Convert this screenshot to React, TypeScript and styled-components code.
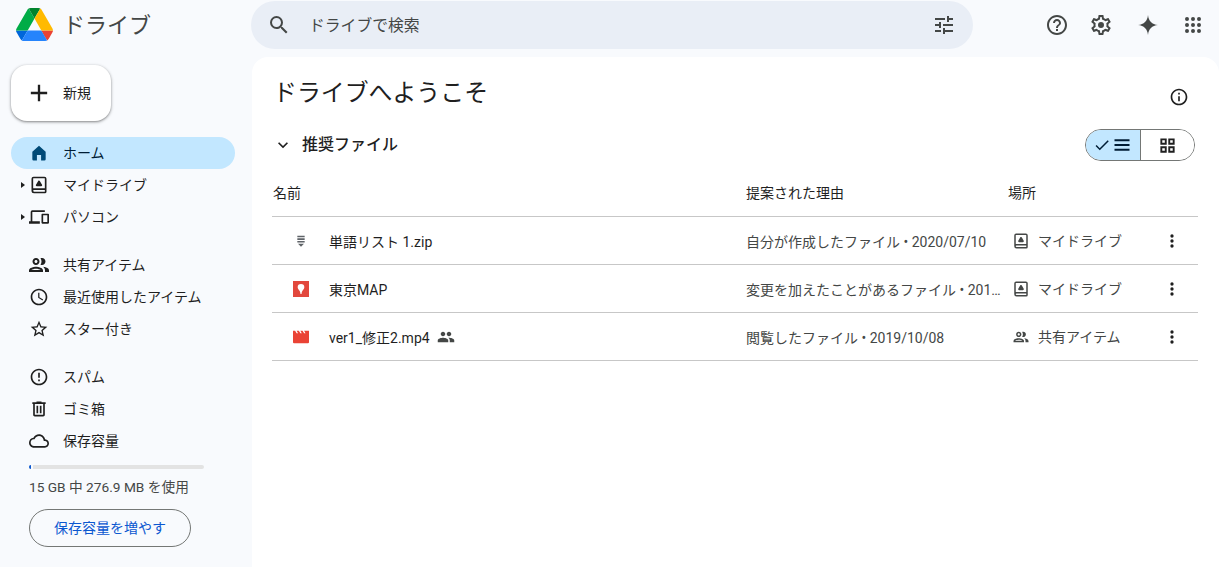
import React from "react";
import styled, { createGlobalStyle } from "styled-components";

const P = {
  search: "M15.5 14h-.79l-.28-.27A6.471 6.471 0 0 0 16 9.5 6.5 6.5 0 1 0 9.5 16c1.61 0 3.09-.59 4.23-1.57l.27.28v.79l5 4.99L20.49 19l-4.99-5zm-6 0C7.01 14 5 11.99 5 9.5S7.01 5 9.5 5 14 7.01 14 9.5 11.99 14 9.5 14z",
  tune: "M3 17v2h6v-2H3zM3 5v2h10V5H3zm10 16v-2h8v-2h-8v-2h-2v6h2zM7 9v2H3v2h4v2h2V9H7zm14 4v-2H11v2h10zm-6-4h2V7h4V5h-4V3h-2v6z",
  help: "M11 18h2v-2h-2v2zm1-16C6.48 2 2 6.48 2 12s4.48 10 10 10 10-4.48 10-10S17.52 2 12 2zm0 18c-4.41 0-8-3.59-8-8s3.59-8 8-8 8 3.59 8 8-3.59 8-8 8zm0-14c-2.21 0-4 1.79-4 4h2c0-1.1.9-2 2-2s2 .9 2 2c0 2-3 1.75-3 5h2c0-2.25 3-2.5 3-5 0-2.21-1.79-4-4-4z",
  gear: "M19.43 12.98c.04-.32.07-.64.07-.98 0-.34-.03-.66-.07-.98l2.11-1.65c.19-.15.24-.42.12-.64l-2-3.46c-.09-.16-.26-.25-.44-.25-.06 0-.12.01-.17.03l-2.49 1c-.52-.4-1.08-.73-1.69-.98l-.38-2.65C14.46 2.18 14.25 2 14 2h-4c-.25 0-.46.18-.49.42l-.38 2.65c-.61.25-1.17.59-1.69.98l-2.49-1c-.06-.02-.12-.03-.18-.03-.17 0-.34.09-.43.25l-2 3.46c-.13.22-.07.49.12.64l2.11 1.65c-.04.32-.07.65-.07.98 0 .33.03.66.07.98l-2.11 1.65c-.19.15-.24.42-.12.64l2 3.46c.09.16.26.25.44.25.06 0 .12-.01.17-.03l2.49-1c.52.4 1.08.73 1.69.98l.38 2.65c.03.24.24.42.49.42h4c.25 0 .46-.18.49-.42l.38-2.65c.61-.25 1.17-.59 1.69-.98l2.49 1c.06.02.12.03.18.03.17 0 .34-.09.43-.25l2-3.46c.12-.22.07-.49-.12-.64l-2.11-1.65zm-1.98-1.71c.04.31.05.52.05.73 0 .21-.02.43-.05.73l-.14 1.13.89.7 1.08.84-.7 1.21-1.27-.51-1.04-.42-.9.68c-.43.32-.84.56-1.25.73l-1.06.43-.16 1.13-.2 1.35h-1.4l-.19-1.35-.16-1.13-1.06-.43c-.43-.18-.83-.41-1.23-.71l-.91-.7-1.06.43-1.27.51-.7-1.21 1.08-.84.89-.7-.14-1.13c-.03-.31-.05-.54-.05-.74s.02-.43.05-.73l.14-1.13-.89-.7-1.08-.84.7-1.21 1.27.51 1.04.42.9-.68c.43-.32.84-.56 1.25-.73l1.06-.43.16-1.13.2-1.35h1.39l.19 1.35.16 1.13 1.06.43c.43.18.83.41 1.23.71l.91.7 1.06-.43 1.27-.51.7 1.21-1.07.85-.89.7.14 1.13zM12 9a3 3 0 1 0 0 6 3 3 0 0 0 0-6z",
  spark: "M12 2C12.6 8 16 11.4 22 12 16 12.6 12.6 16 12 22 11.4 16 8 12.6 2 12 8 11.4 11.4 8 12 2z",
  apps: "M6 8a2 2 0 1 0 0-4 2 2 0 0 0 0 4zm6 0a2 2 0 1 0 0-4 2 2 0 0 0 0 4zm6 0a2 2 0 1 0 0-4 2 2 0 0 0 0 4zM6 14a2 2 0 1 0 0-4 2 2 0 0 0 0 4zm6 0a2 2 0 1 0 0-4 2 2 0 0 0 0 4zm6 0a2 2 0 1 0 0-4 2 2 0 0 0 0 4zM6 20a2 2 0 1 0 0-4 2 2 0 0 0 0 4zm6 0a2 2 0 1 0 0-4 2 2 0 0 0 0 4zm6 0a2 2 0 1 0 0-4 2 2 0 0 0 0 4z",
  plus: "M19 13h-6v6h-2v-6H5v-2h6V5h2v6h6v2z",
  home: "M4 19.5V10.5L12 3.2l8 7.3v9a1.5 1.5 0 0 1-1.5 1.5h-4v-6.5h-5V21h-4A1.5 1.5 0 0 1 4 19.5z",
  drive: "M18.5 2h-13A2.5 2.5 0 0 0 3 4.5V19a3 3 0 0 0 3 3h13a2 2 0 0 0 2-2V4.5A2.5 2.5 0 0 0 18.5 2zM19 20H6a1 1 0 0 1 0-2h13v2zm0-4H5V4.5c0-.28.22-.5.5-.5h13c.28 0 .5.22.5.5V16zM12 6.6c-.4 0-.75.2-.95.55l-2.7 4.6c-.45.75.1 1.75 1 1.75h5.3c.9 0 1.45-1 1-1.75l-2.7-4.6A1.1 1.1 0 0 0 12 6.6z",
  computer: "M4 6h15V4H4a2 2 0 0 0-2 2v11H0v3h13v-3H4V6zm19 2h-7a1 1 0 0 0-1 1v10a1 1 0 0 0 1 1h7a1 1 0 0 0 1-1V9a1 1 0 0 0-1-1zm-1 10h-5v-8h5v8z",
  people: "M9 13.75c-2.34 0-7 1.17-7 3.5V19h14v-1.75c0-2.33-4.66-3.5-7-3.5zM4.34 17c.84-.58 2.87-1.25 4.66-1.25s3.82.67 4.66 1.25H4.34zM9 12c1.93 0 3.5-1.57 3.5-3.5S10.93 5 9 5 5.5 6.57 5.5 8.5 7.07 12 9 12zm0-5c.83 0 1.5.67 1.5 1.5S9.83 10 9 10s-1.5-.67-1.5-1.5S8.17 7 9 7zm7.04 6.81c1.16.84 1.96 1.96 1.96 3.44V19h4v-1.75c0-2.02-3.5-3.17-5.96-3.44zM15 12c1.93 0 3.5-1.57 3.5-3.5S16.93 5 15 5c-.54 0-1.04.13-1.5.35.63.89 1 1.98 1 3.15s-.37 2.26-1 3.15c.46.22.96.35 1.5.35z",
  group: "M16 11c1.66 0 2.99-1.34 2.99-3S17.66 5 16 5c-1.66 0-3 1.34-3 3s1.34 3 3 3zm-8 0c1.66 0 2.99-1.34 2.99-3S9.66 5 8 5C6.34 5 5 6.34 5 8s1.34 3 3 3zm0 2c-2.33 0-7 1.17-7 3.5V19h14v-2.5c0-2.33-4.67-3.5-7-3.5zm8 0c-.29 0-.62.02-.97.05 1.16.84 1.97 1.97 1.97 3.45V19h6v-2.5c0-2.33-4.67-3.5-7-3.5z",
  clock: "M11.99 2C6.47 2 2 6.48 2 12s4.47 10 9.99 10C17.52 22 22 17.52 22 12S17.52 2 11.99 2zM12 20c-4.42 0-8-3.58-8-8s3.58-8 8-8 8 3.58 8 8-3.58 8-8 8zm.5-13H11v6l5.25 3.15.75-1.23-4.5-2.67z",
  star: "M22 9.24l-7.19-.62L12 2 9.19 8.63 2 9.24l5.46 4.73L5.82 21 12 17.27 18.18 21l-1.63-7.03L22 9.24zM12 15.4l-3.76 2.27 1-4.28-3.32-2.88 4.38-.38L12 6.1l1.71 4.04 4.38.38-3.32 2.88 1 4.28L12 15.4z",
  spam: "M11 15h2v2h-2zm0-8h2v6h-2zm.99-5C6.47 2 2 6.48 2 12s4.47 10 9.99 10C17.52 22 22 17.52 22 12S17.52 2 11.99 2zM12 20c-4.42 0-8-3.58-8-8s3.58-8 8-8 8 3.58 8 8-3.58 8-8 8z",
  trash: "M15 4V3H9v1H4v2h1v13c0 1.1.9 2 2 2h10c1.1 0 2-.9 2-2V6h1V4h-5zm2 15H7V6h10v13zM9 8h2v9H9zm4 0h2v9h-2z",
  cloud: "M12 6c2.62 0 4.88 1.86 5.39 4.43l.3 1.5 1.53.11c1.56.1 2.78 1.41 2.78 2.96 0 1.65-1.35 3-3 3H6c-2.21 0-4-1.79-4-4 0-2.05 1.53-3.76 3.56-3.97l1.07-.11.5-.95C8.08 7.14 9.94 6 12 6m0-2C9.11 4 6.54 5.64 5.35 8.04 2.34 8.36 0 10.91 0 14c0 3.31 2.69 6 6 6h13c2.76 0 5-2.24 5-5 0-2.64-2.05-4.78-4.65-4.96C18.67 6.59 15.64 4 12 4z",
  info: "M11 7h2v2h-2zm0 4h2v6h-2zm1-9C6.48 2 2 6.48 2 12s4.48 10 10 10 10-4.48 10-10S17.52 2 12 2zm0 18c-4.41 0-8-3.59-8-8s3.59-8 8-8 8 3.59 8 8-3.59 8-8 8z",
  chevron: "M7.41 8.59 12 13.17l4.59-4.58L18 10l-6 6-6-6z",
  check: "M9 16.2 4.8 12l-1.4 1.4L9 19 21 7l-1.4-1.4z",
  menu: "M3 19h18v-2.4H3V19zm0-5.8h18v-2.4H3v2.4zM3 5v2.4h18V5H3z",
  grid: "M3 3h8v8H3V3zm2.4 2.4v3.2h3.2V5.4H5.4zM13 3h8v8h-8V3zm2.4 2.4v3.2h3.2V5.4h-3.2zM3 13h8v8H3v-8zm2.4 2.4v3.2h3.2v-3.2H5.4zM13 13h8v8h-8v-8zm2.4 2.4v3.2h3.2v-3.2h-3.2z",
  more: "M12 8a2 2 0 1 0 0-4 2 2 0 0 0 0 4zm0 2a2 2 0 1 0 0 4 2 2 0 0 0 0-4zm0 6a2 2 0 1 0 0 4 2 2 0 0 0 0-4z",
  zip: "M6.5 4h11v2.4h-11zm0 4h11v2.4h-11zm0 4h11v2.4h-11zM7.5 16h9L12 20.5z",
  map: "M0 0h24v24H0V0zm12 4.5a5 5 0 0 0-5 5c0 3 2.6 4.4 3.4 6.2.4.9.6 2 .8 3.8h1.6c.2-1.8.4-2.9.8-3.8.8-1.8 3.4-3.2 3.4-6.2a5 5 0 0 0-5-5z",
  video: "M0 2.5h3.2l2.2 3.7h2.2L5.4 2.5h3.4l2.2 3.7h2.2l-2.2-3.7h3.4l2.2 3.7h2.2l-2.2-3.7H24V20a1.5 1.5 0 0 1-1.5 1.5h-21A1.5 1.5 0 0 1 0 20V2.5z",
};

const Icon = ({ d, size = 20, color }: { d: string; size?: number; color?: string }) => (
  <svg width={size} height={size} viewBox="0 0 24 24" fill={color || "currentColor"} style={{ flexShrink: 0, display: "block" }}>
    <path d={d} fillRule="evenodd" />
  </svg>
);

const DriveLogo = () => (
  <svg width="37" height="33" viewBox="0 0 87.3 78" style={{ display: "block" }}>
    <path d="m6.6 66.85 3.85 6.65c.8 1.4 1.95 2.5 3.3 3.3l13.75-23.8h-27.5c0 1.55.4 3.1 1.2 4.5z" fill="#0066da" />
    <path d="m43.65 25-13.75-23.8c-1.35.8-2.5 1.9-3.3 3.3l-25.4 44a9.06 9.06 0 0 0 -1.2 4.5h27.5z" fill="#00ac47" />
    <path d="m73.55 76.8c1.35-.8 2.5-1.9 3.3-3.3l1.6-2.75 7.65-13.25c.8-1.4 1.2-2.95 1.2-4.5h-27.502l5.852 11.5z" fill="#ea4335" />
    <path d="m43.65 25 13.75-23.8c-1.35-.8-2.9-1.2-4.5-1.2h-18.5c-1.6 0-3.15.45-4.5 1.2z" fill="#00832d" />
    <path d="m59.8 53h-32.3l-13.75 23.8c1.35.8 2.9 1.2 4.5 1.2h50.8c1.6 0 3.15-.45 4.5-1.2z" fill="#2684fc" />
    <path d="m73.4 26.5-12.7-22c-.8-1.4-1.95-2.5-3.3-3.3l-13.75 23.8 16.15 28h27.45c0-1.55-.4-3.1-1.2-4.5z" fill="#ffba00" />
  </svg>
);

const GlobalStyle = createGlobalStyle`
  html, body {
    margin: 0;
    padding: 0;
    height: 100%;
    background: #f8fafd;
    overflow: hidden;
  }
  * {
    box-sizing: border-box;
  }
  body {
    font-family: Roboto, "Noto Sans CJK JP", "Noto Sans", sans-serif;
    color: #1f1f1f;
  }
`;

const Page = styled.div`
  width: 1219px;
  height: 567px;
  display: flex;
  flex-direction: column;
  overflow: hidden;
`;
const Header = styled.header`
  height: 57px;
  flex-shrink: 0;
  display: flex;
  align-items: flex-start;
  padding-right: 4px;
`;
const Brand = styled.div`
  width: 251px;
  height: 49px;
  padding-left: 16px;
  display: flex;
  align-items: center;
  gap: 10px;
`;
const BrandName = styled.span`
  font-size: 22px;
  color: #444746;
  padding-bottom: 4px;
`;
const SearchBar = styled.div`
  width: 722px;
  height: 48px;
  margin-top: 1px;
  padding: 0 17px 0 16px;
  border-radius: 24px;
  background: #e9eef6;
  display: flex;
  align-items: center;
  gap: 18px;
  color: #444746;
`;
const SearchText = styled.span`
  flex: 1;
  font-size: 15.8px;
  padding-bottom: 2px;
`;
const Actions = styled.div`
  margin-left: auto;
  height: 49px;
  display: flex;
  align-items: center;
  color: #444746;
`;
const ActionButton = styled.div<{ $offset?: number }>`
  width: 44px;
  height: 44px;
  margin-left: ${({ $offset }) => $offset || 0}px;
  display: flex;
  align-items: center;
  justify-content: center;
`;
const Body = styled.div`
  flex: 1;
  min-height: 0;
  display: flex;
`;
const Sidebar = styled.aside`
  width: 252px;
  flex-shrink: 0;
  padding: 8px 0 0 11px;
`;
const NewButton = styled.div`
  width: 100px;
  height: 56px;
  padding-left: 14px;
  border-radius: 16px;
  background: #fff;
  box-shadow: 0 1px 2px rgba(0, 0, 0, 0.3), 0 1px 3px 1px rgba(0, 0, 0, 0.15);
  display: flex;
  align-items: center;
  gap: 10px;
  font-size: 14px;
`;
const NewLabel = styled.span`
  padding-bottom: 2px;
`;
const Nav = styled.nav`
  width: 224px;
  margin-top: 16px;
  display: flex;
  flex-direction: column;
  gap: 16px;
`;
const NavGroup = styled.div`
  display: flex;
  flex-direction: column;
`;
const NavItem = styled.div<{ $active?: boolean }>`
  height: 32px;
  display: flex;
  align-items: center;
  border-radius: 16px;
  font-size: 14px;
  background: ${({ $active }) => ($active ? "#c2e7ff" : "transparent")};
  color: ${({ $active }) => ($active ? "#001d35" : "#1f1f1f")};
  svg {
    color: ${({ $active }) => ($active ? "#004a77" : "#1f1f1f")};
  }
`;
const CaretSlot = styled.span`
  width: 18px;
  display: flex;
  justify-content: flex-end;
  padding-right: 4px;
`;
const Caret = styled.span`
  width: 0;
  height: 0;
  border-top: 3px solid transparent;
  border-bottom: 3px solid transparent;
  border-left: 4px solid #1f1f1f;
`;
const NavIconSlot = styled.span`
  width: 20px;
  display: flex;
  justify-content: center;
`;
const NavLabel = styled.span`
  margin-left: 14px;
  padding-bottom: 2px;
`;
const Storage = styled.div`
  width: 175px;
  margin: 8px 0 0 18px;
`;
const StorageTrack = styled.div`
  height: 4px;
  border-radius: 2px;
  background: #e3e3e3;
  display: flex;
  overflow: hidden;
`;
const StorageFill = styled.div`
  width: 2px;
  background: #0b57d0;
  box-shadow: 2px 0 0 #f8fafd;
`;
const StorageText = styled.div`
  width: 200px;
  margin-top: 9px;
  font-size: 13.7px;
  line-height: 18px;
  color: #444746;
`;
const StorageButton = styled.div`
  width: 162px;
  height: 38px;
  margin-top: 13px;
  padding-bottom: 3px;
  border: 1px solid #747775;
  border-radius: 19px;
  display: flex;
  align-items: center;
  justify-content: center;
  font-size: 14px;
  color: #0b57d0;
`;
const Main = styled.main`
  flex: 1;
  background: #fff;
  border-radius: 16px 16px 0 0;
  padding: 20px 21px 0 20px;
`;
const TitleRow = styled.div`
  height: 30px;
  padding: 0 9px 0 1px;
  display: flex;
  justify-content: space-between;
`;
const Title = styled.h1`
  margin: 1px 0 0;
  font-size: 23.9px;
  line-height: 30px;
  font-weight: 400;
`;
const InfoSlot = styled.div`
  align-self: flex-end;
`;
const SectionRow = styled.div`
  height: 32px;
  margin-top: 22px;
  padding: 0 3px 0 1px;
  display: flex;
  align-items: center;
`;
const SectionTitle = styled.h2`
  margin: 0 0 0 9px;
  padding-bottom: 4px;
  flex: 1;
  font-size: 16px;
  font-weight: 500;
  color: #1f1f1f;
`;
const Toggle = styled.div`
  width: 110px;
  height: 32px;
  border: 1px solid #747775;
  border-radius: 16px;
  overflow: hidden;
  display: flex;
`;
const ToggleSide = styled.div<{ $on?: boolean }>`
  flex: 1;
  display: flex;
  align-items: center;
  justify-content: center;
  gap: 1px;
  background: ${({ $on }) => ($on ? "#c2e7ff" : "#fff")};
  color: ${({ $on }) => ($on ? "#001d35" : "#1f1f1f")};
  & + & {
    border-left: 1px solid #747775;
  }
`;
const Table = styled.div`
  margin-top: 8px;
`;
const HeadRow = styled.div`
  display: grid;
  grid-template-columns: 474px 262px 1fr;
  height: 48px;
  align-items: center;
  border-bottom: 1px solid #c7c7c7;
  font-size: 14px;
  padding-bottom: 2px;
`;
const HeadName = styled.span`
  padding-left: 1px;
`;
const Row = styled.div`
  display: grid;
  grid-template-columns: 474px 262px 138px 52px;
  height: 48px;
  align-items: center;
  border-bottom: 1px solid #c7c7c7;
  font-size: 14px;
`;
const NameCell = styled.div`
  padding-left: 21px;
  display: flex;
  align-items: center;
`;
const FileName = styled.span`
  margin-left: 20px;
  color: #1f1f1f;
`;
const SharedMark = styled.span`
  margin-left: 7px;
  color: #444746;
`;
const ReasonCell = styled.div`
  padding-right: 6px;
  color: #444746;
  white-space: nowrap;
  overflow: hidden;
  text-overflow: ellipsis;
`;
const PlaceCell = styled.div`
  padding-left: 4px;
  display: flex;
  align-items: center;
  gap: 8px;
  color: #444746;
`;
const PlaceLabel = styled.span`
  padding-bottom: 2px;
`;
const MoreCell = styled.div`
  display: flex;
  justify-content: center;
  color: #1f1f1f;
`;

const navGroups = [
  [
    { icon: P.home, label: "ホーム", active: true },
    { icon: P.drive, label: "マイドライブ", caret: true },
    { icon: P.computer, label: "パソコン", caret: true },
  ],
  [
    { icon: P.people, label: "共有アイテム", size: 24 },
    { icon: P.clock, label: "最近使用したアイテム" },
    { icon: P.star, label: "スター付き" },
  ],
  [
    { icon: P.spam, label: "スパム" },
    { icon: P.trash, label: "ゴミ箱" },
    { icon: P.cloud, label: "保存容量" },
  ],
];

const files = [
  { icon: P.zip, color: "#5f6368", name: "単語リスト 1.zip", reason: "自分が作成したファイル • 2020/07/10", placeIcon: P.drive, place: "マイドライブ" },
  { icon: P.map, color: "#e2483d", name: "東京MAP", reason: "変更を加えたことがあるファイル • 2019/10/08", placeIcon: P.drive, place: "マイドライブ" },
  { icon: P.video, color: "#ea4335", name: "ver1_修正2.mp4", shared: true, reason: "閲覧したファイル • 2019/10/08", placeIcon: P.people, place: "共有アイテム" },
];

export default function App() {
  return (
    <Page>
      <GlobalStyle />
      <Header>
        <Brand>
          <DriveLogo />
          <BrandName>ドライブ</BrandName>
        </Brand>
        <SearchBar>
          <Icon d={P.search} size={24} />
          <SearchText>ドライブで検索</SearchText>
          <Icon d={P.tune} size={24} />
        </SearchBar>
        <Actions>
          <ActionButton><Icon d={P.help} size={24} /></ActionButton>
          <ActionButton><Icon d={P.gear} size={24} /></ActionButton>
          <ActionButton $offset={3}><Icon d={P.spark} size={24} /></ActionButton>
          <ActionButton $offset={1}><Icon d={P.apps} size={24} /></ActionButton>
        </Actions>
      </Header>
      <Body>
        <Sidebar>
          <NewButton>
            <Icon d={P.plus} size={28} />
            <NewLabel>新規</NewLabel>
          </NewButton>
          <Nav>
            {navGroups.map((group, i) => (
              <NavGroup key={i}>
                {group.map((item) => (
                  <NavItem key={item.label} $active={item.active}>
                    <CaretSlot>{item.caret && <Caret />}</CaretSlot>
                    <NavIconSlot><Icon d={item.icon} size={item.size} /></NavIconSlot>
                    <NavLabel>{item.label}</NavLabel>
                  </NavItem>
                ))}
              </NavGroup>
            ))}
          </Nav>
          <Storage>
            <StorageTrack>
              <StorageFill />
            </StorageTrack>
            <StorageText>15 GB 中 276.9 MB を使用</StorageText>
            <StorageButton>保存容量を増やす</StorageButton>
          </Storage>
        </Sidebar>
        <Main>
          <TitleRow>
            <Title>ドライブへようこそ</Title>
            <InfoSlot><Icon d={P.info} /></InfoSlot>
          </TitleRow>
          <SectionRow>
            <Icon d={P.chevron} />
            <SectionTitle>推奨ファイル</SectionTitle>
            <Toggle>
              <ToggleSide $on>
                <Icon d={P.check} size={18} />
                <Icon d={P.menu} size={20} />
              </ToggleSide>
              <ToggleSide>
                <Icon d={P.grid} size={19} />
              </ToggleSide>
            </Toggle>
          </SectionRow>
          <Table>
            <HeadRow>
              <HeadName>名前</HeadName>
              <span>提案された理由</span>
              <span>場所</span>
            </HeadRow>
            {files.map((file) => (
              <Row key={file.name}>
                <NameCell>
                  <Icon d={file.icon} size={16} color={file.color} />
                  <FileName>{file.name}</FileName>
                  {file.shared && <SharedMark><Icon d={P.group} size={18} /></SharedMark>}
                </NameCell>
                <ReasonCell>{file.reason}</ReasonCell>
                <PlaceCell>
                  <Icon d={file.placeIcon} size={18} />
                  <PlaceLabel>{file.place}</PlaceLabel>
                </PlaceCell>
                <MoreCell><Icon d={P.more} /></MoreCell>
              </Row>
            ))}
          </Table>
        </Main>
      </Body>
    </Page>
  );
}
